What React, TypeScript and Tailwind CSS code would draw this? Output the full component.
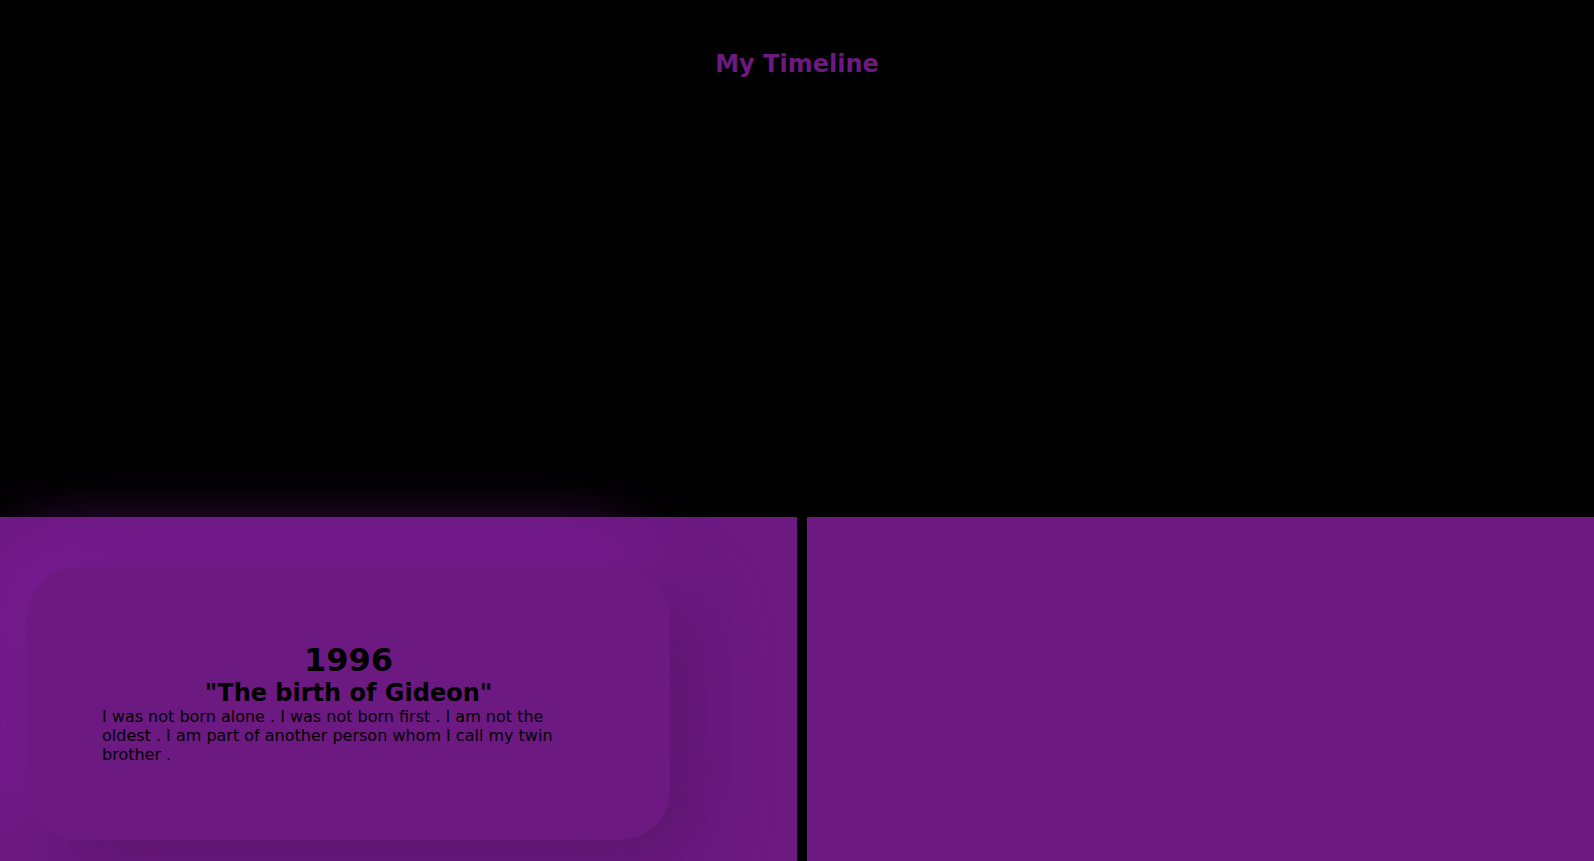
import React from 'react'

const font = { fontFamily: '"DejaVu Sans", Verdana, sans-serif' }

function EventCard() {
    return (
        <div className="ml-[27px] flex h-[273px] w-[643px] flex-col items-center justify-center rounded-[50px] bg-[#6c1a82] px-[75px] pb-[2px] text-black shadow-[22px_22px_70px_#5a156b,-22px_-22px_70px_#7e1f99]">
            <h1 className="text-[32px] font-bold leading-[37px]">1996</h1>
            <h2 className="text-[24px] font-bold leading-[28px]">"The birth of Gideon"</h2>
            <p className="self-stretch text-left text-[16px] leading-[19px]">
                I was not born alone . I was not born first . I am not the oldest . I am part of another
                person whom I call my twin brother .
            </p>
        </div>
    )
}

export default function App() {
    return (
        <div className="min-h-screen bg-black" style={font}>
            <header className="h-[517px] pt-[50px] text-center">
                <h2 className="text-[24px] font-bold leading-[28px] text-[#6c1a82]">My Timeline</h2>
            </header>

            <section className="flex gap-[10px]">
                <div className="h-[400px] w-[797px] bg-[#6c1a82] pt-[50px]">
                    <EventCard />
                </div>
                <div className="h-[400px] flex-1 bg-[#6c1a82]"></div>
            </section>
        </div>
    )
}
